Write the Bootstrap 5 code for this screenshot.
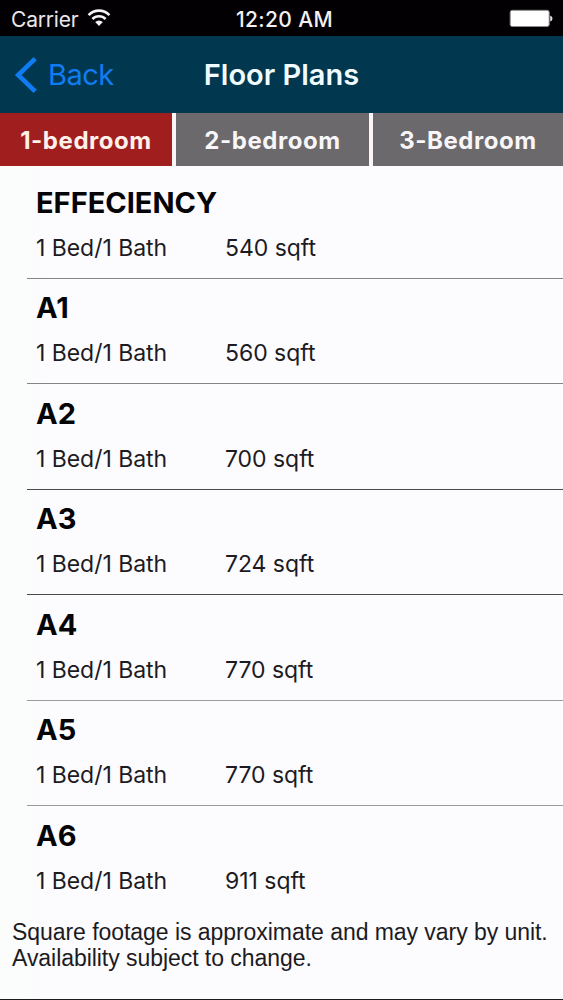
<!DOCTYPE html>
<html lang="en">
<head>
<meta charset="utf-8">
<meta name="viewport" content="width=device-width, initial-scale=1">
<title>Floor Plans</title>
<link href="https://cdn.jsdelivr.net/npm/bootstrap@5.3.0/dist/css/bootstrap.min.css" rel="stylesheet">
<style>
body{font-family:Inter,"Liberation Sans",sans-serif;background:linear-gradient(90deg,#fbfdfb 0,#fcfbfe 50px);color:#1c1b1f;height:1000px;overflow:hidden}
.statusbar{height:36px;background:#020002;color:#e9e7e9;font-size:21px;line-height:38px;padding:0 10px 0 11px}
.statusbar .carrier{letter-spacing:-.2px;padding-top:3px}
.statusbar .clock{font-weight:500;color:#f2f0f2;letter-spacing:.35px;padding:3px 0 0 6px}
.titlebar{height:77px;background:#01384f}
.titlebar .back{color:#107cf4;font-size:29px;line-height:77px;padding-left:14px;gap:10px;letter-spacing:-.5px}
.titlebar h1{font-size:29px;font-weight:600;line-height:77px;color:#f0fcff}
.plan-tabs{height:53px;gap:4px;background:#fbf5f5}
.plan-tabs .nav-link{font-weight:700;font-size:24px;line-height:55px;height:53px;letter-spacing:.55px;color:#f8f6f8;background:#6b696b;border-radius:0}
.plan-tabs .nav-link.active{background:#a01f1e;color:#fdf0ea}
.plans{margin:7.6px 0 0 27px}
.plan{height:105.45px;padding:12.4px 0 0 9px;border-bottom:1px solid #858387}
.plan:nth-child(3),.plan:nth-child(4){border-color:#4b494d}
.plan:nth-child(5),.plan:nth-child(6){border-color:#9b999d}
.plan:last-child{border:0}
.plan h2{font-size:29px;font-weight:700;line-height:34px;color:#050406}
.plan .specs{font-size:23px;line-height:28px;margin-top:14px;letter-spacing:-.04px}
.plan .beds{width:189px}
.note{font:23px/26px "Liberation Sans",sans-serif;letter-spacing:-.05px;padding-left:12px;margin-top:7px;height:81.4px;border-bottom:1px solid #1c1b1f}
</style>
</head>
<body>
<header>
 <div class="statusbar d-flex align-items-center position-relative">
  <span class="carrier">Carrier</span>
  <svg width="24" height="20" viewBox="0 0 24 20" fill="none" stroke="#f4f2f4" stroke-width="2.6" style="margin-left:9px"><path d="M1.6 7.1a14.4 14.4 0 0 1 20.8 0M5.4 11a9.2 9.2 0 0 1 13.2 0"/><path d="M12 18 8.2 14.1a5.5 5.5 0 0 1 7.6 0z" fill="#f4f2f4" stroke="none"/></svg>
  <span class="clock position-absolute start-50 translate-middle-x text-nowrap">12:20 AM</span>
  <svg class="ms-auto" width="44" height="18" viewBox="0 0 44 18"><rect x="1.2" y="1.3" width="39" height="16.2" rx="2" fill="#fff" stroke="#8b898b"/><path d="M41.2 6.4q2.3.8 2.3 3.1t-2.3 3.1z" fill="#e0dee0"/></svg>
 </div>
 <nav class="titlebar navbar p-0 position-relative">
  <a class="back d-flex align-items-center text-decoration-none" href="#">
   <svg width="24" height="38" viewBox="0 0 24 38" fill="none" stroke="currentColor" stroke-width="4.6"><path d="M21.2 2.7 4.2 19l17 16.3"/></svg>
   <span>Back</span>
  </a>
  <h1 class="position-absolute start-50 translate-middle-x m-0 text-nowrap">Floor Plans</h1>
 </nav>
 <nav class="plan-tabs nav flex-nowrap">
  <a class="nav-link active p-0 text-center" href="#" style="width:172px">1-bedroom</a>
  <a class="nav-link p-0 text-center" href="#" style="width:193px">2-bedroom</a>
  <a class="nav-link p-0 text-center flex-fill" href="#">3-Bedroom</a>
 </nav>
</header>
<main>
 <div class="plans">
  <section class="plan"><h2 class="m-0">EFFECIENCY</h2><div class="specs d-flex"><span class="beds">1 Bed/1 Bath</span><span>540 sqft</span></div></section>
  <section class="plan"><h2 class="m-0">A1</h2><div class="specs d-flex"><span class="beds">1 Bed/1 Bath</span><span>560 sqft</span></div></section>
  <section class="plan"><h2 class="m-0">A2</h2><div class="specs d-flex"><span class="beds">1 Bed/1 Bath</span><span>700 sqft</span></div></section>
  <section class="plan"><h2 class="m-0">A3</h2><div class="specs d-flex"><span class="beds">1 Bed/1 Bath</span><span>724 sqft</span></div></section>
  <section class="plan"><h2 class="m-0">A4</h2><div class="specs d-flex"><span class="beds">1 Bed/1 Bath</span><span>770 sqft</span></div></section>
  <section class="plan"><h2 class="m-0">A5</h2><div class="specs d-flex"><span class="beds">1 Bed/1 Bath</span><span>770 sqft</span></div></section>
  <section class="plan"><h2 class="m-0">A6</h2><div class="specs d-flex"><span class="beds">1 Bed/1 Bath</span><span>911 sqft</span></div></section>
 </div>
 <p class="note mb-0">Square footage is approximate and may vary by unit.<br>Availability subject to change.</p>
</main>
<script src="https://cdn.jsdelivr.net/npm/bootstrap@5.3.0/dist/js/bootstrap.bundle.min.js"></script>
</body>
</html>
